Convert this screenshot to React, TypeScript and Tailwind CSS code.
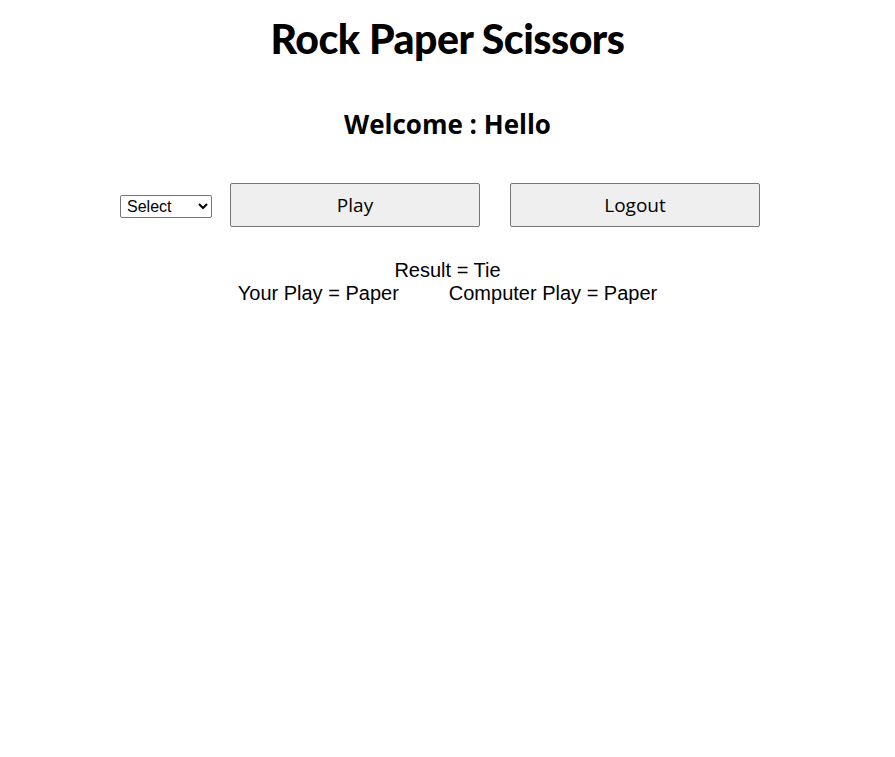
import { useState } from "react";

export default function App() {
  const [choice, setChoice] = useState("");

  return (
    <div className="min-h-screen bg-white text-black">
      <h1 className="pt-[11px] text-center text-[41px] font-black leading-[56px] tracking-[-0.5px] [font-family:Lato,sans-serif]">
        Rock Paper Scissors
      </h1>
      <h2 className="mt-[39px] text-center text-[26px] font-bold leading-[36px] [font-family:'Open_Sans',sans-serif]">
        Welcome : Hello
      </h2>

      <div className="mt-[41px] flex items-center justify-center">
        <select
          value={choice}
          onChange={(e) => setChoice(e.target.value)}
          className="mt-[3px] h-[23px] w-[92px] rounded-[2px] border border-[#767676] bg-white px-[2px] text-[16px] [font-family:'Liberation_Sans',Arial,sans-serif]"
        >
          <option value="">Select</option>
          <option value="Rock">Rock</option>
          <option value="Paper">Paper</option>
          <option value="Scissors">Scissors</option>
        </select>
        <button className="ml-[18px] h-[44px] w-[250px] rounded-[2px] border border-[#767676] bg-[#efefef] text-[19px] [font-family:'Open_Sans',sans-serif]">
          Play
        </button>
        <button className="ml-[30px] mr-[15px] h-[44px] w-[250px] rounded-[2px] border border-[#767676] bg-[#efefef] text-[19px] [font-family:'Open_Sans',sans-serif]">
          Logout
        </button>
      </div>

      <div className="mt-[32px] text-center text-[20px] leading-[23px] [font-family:'Liberation_Sans',Arial,sans-serif]">
        <div>Result = Tie</div>
        <div className="flex justify-center gap-[50px]">
          <span>Your Play = Paper</span>
          <span>Computer Play = Paper</span>
        </div>
      </div>
    </div>
  );
}
